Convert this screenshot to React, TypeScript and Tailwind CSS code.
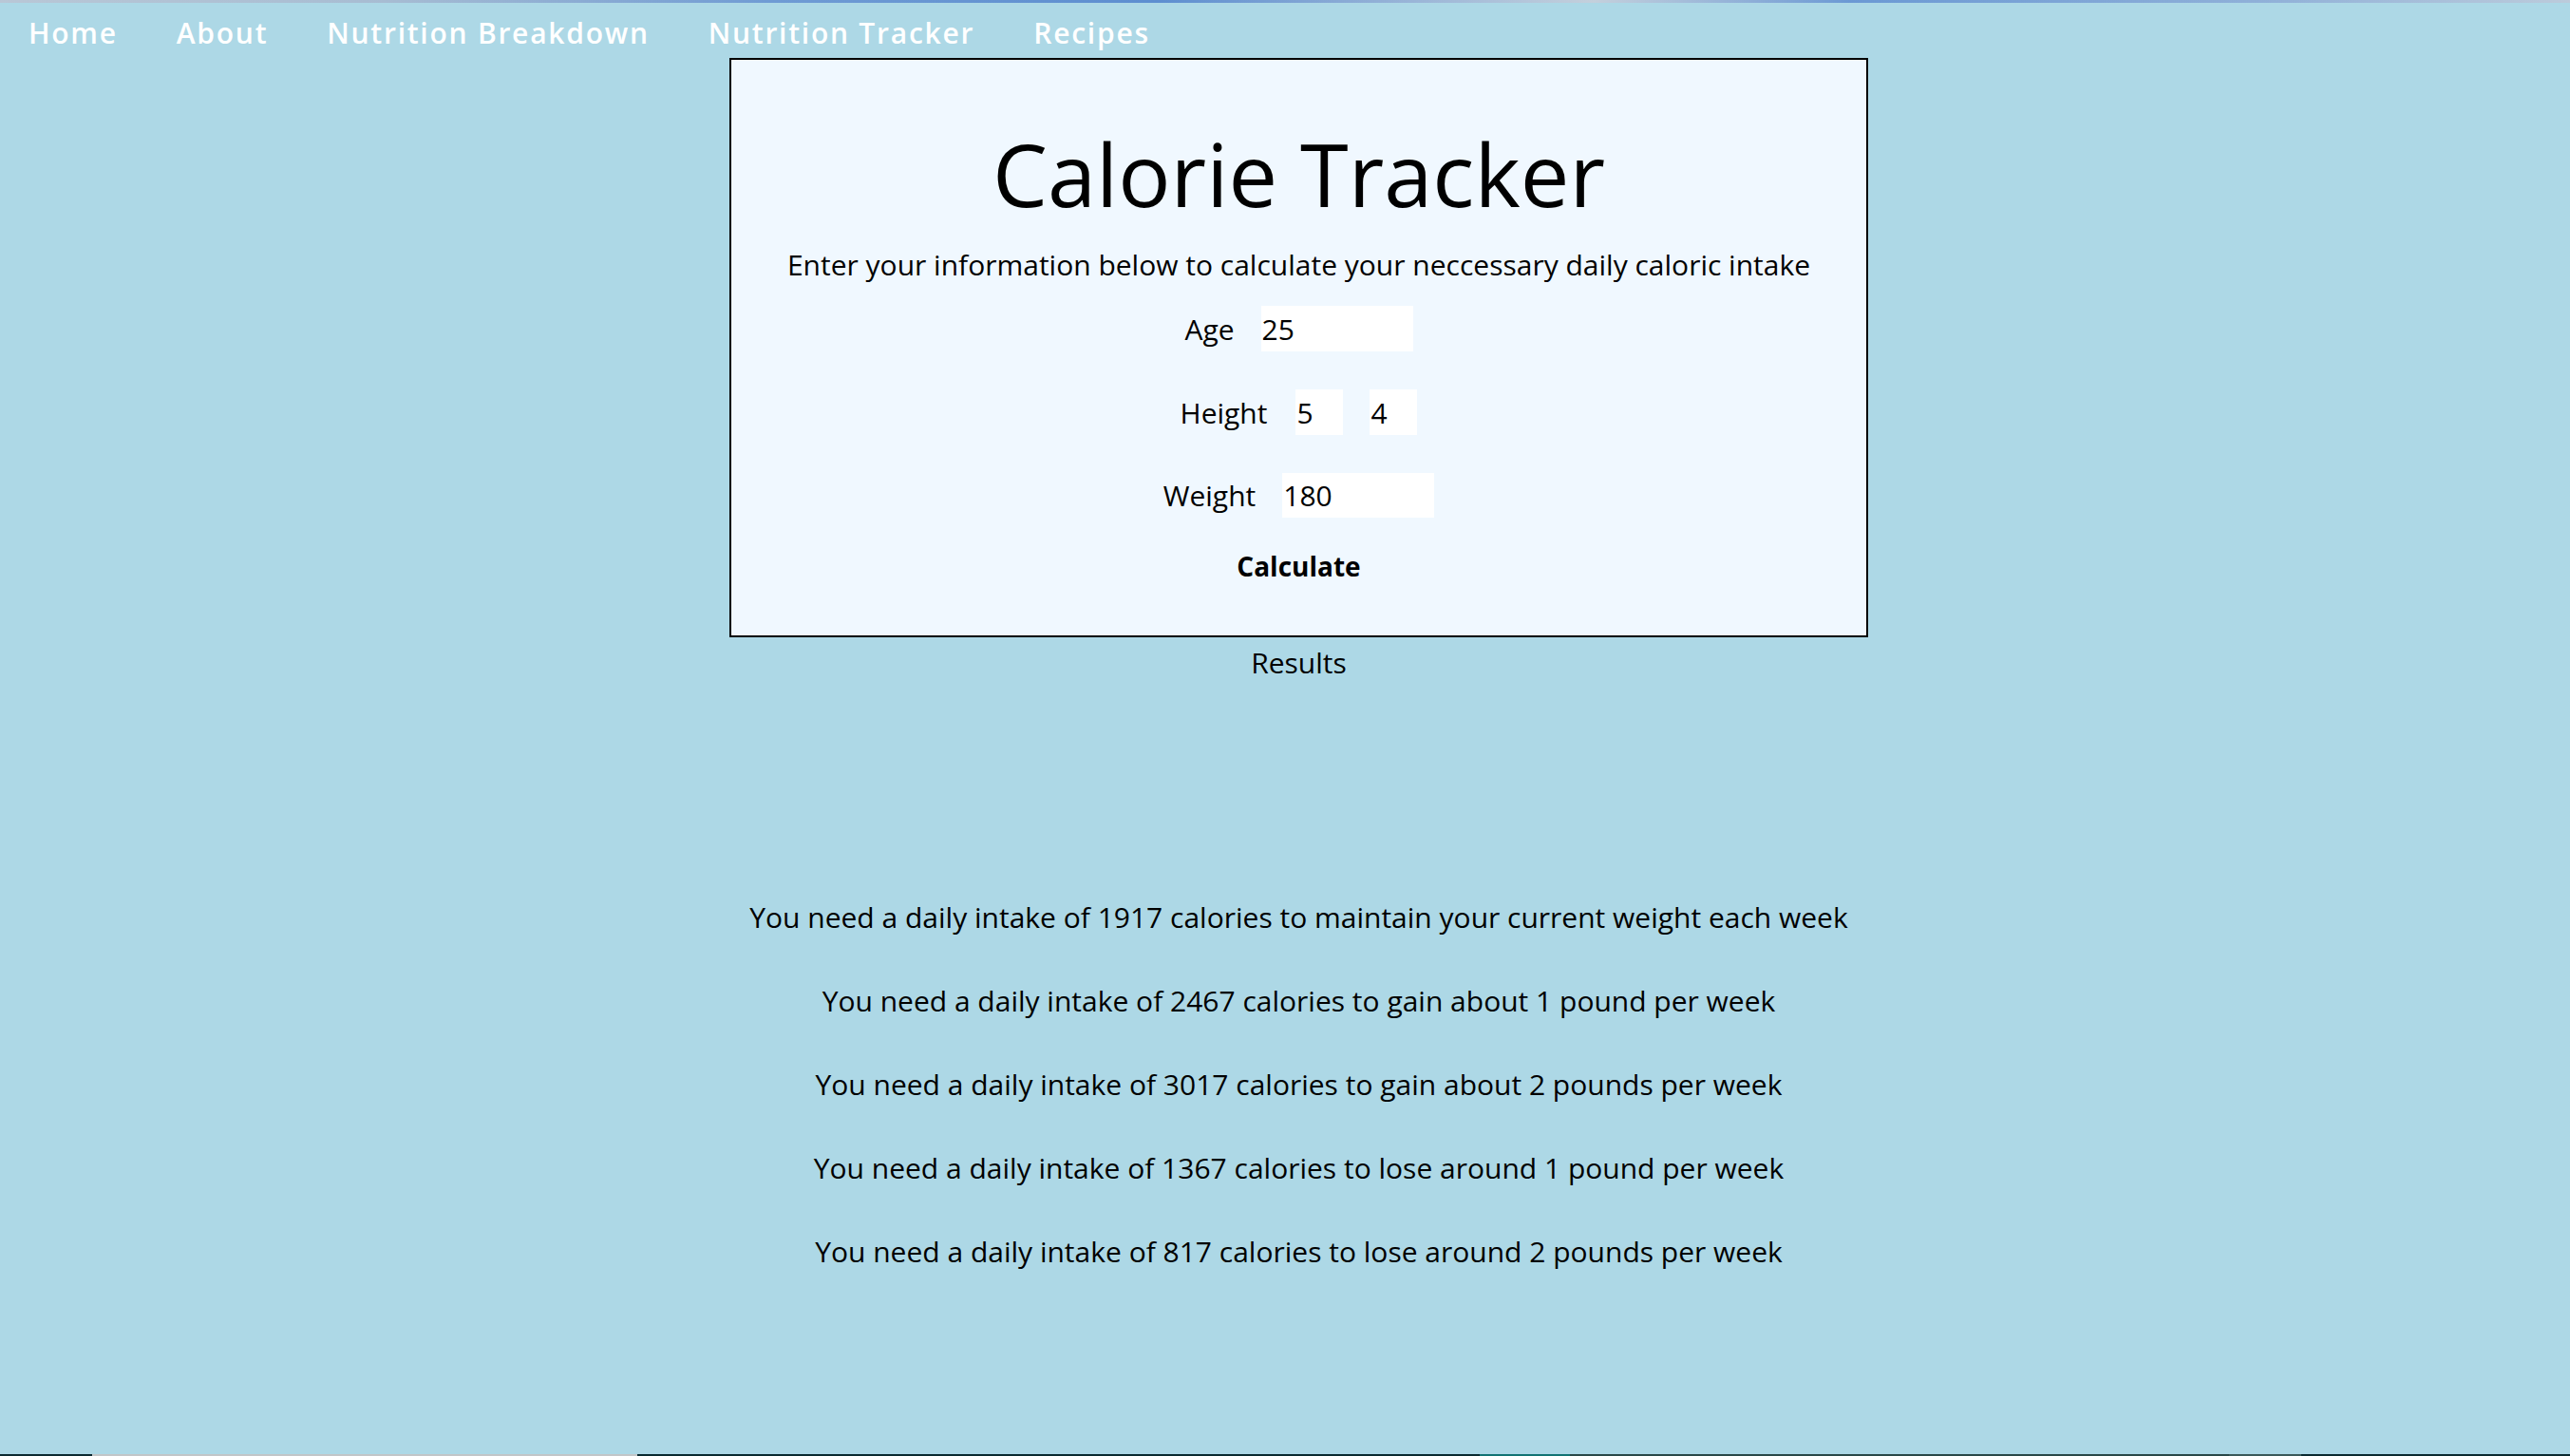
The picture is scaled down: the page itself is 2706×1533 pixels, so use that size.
import React from "react";

const font = { fontFamily: '"Open Sans", "Noto Sans", sans-serif' };

const results = [
  "You need a daily intake of 1917 calories to maintain your current weight each week",
  "You need a daily intake of 2467 calories to gain about 1 pound per week",
  "You need a daily intake of 3017 calories to gain about 2 pounds per week",
  "You need a daily intake of 1367 calories to lose around 1 pound per week",
  "You need a daily intake of 817 calories to lose around 2 pounds per week",
];

export default function App() {
  return (
    <div className="min-h-screen bg-[#add8e6] flex flex-col text-black" style={font}>
      <div className="h-[3px] bg-[linear-gradient(90deg,#b9c7d6_0%,#a7bcd2_15%,#6f9bd4_30%,#5d8ed0_45%,#c4d0dc_62%,#6b99d4_72%,#8fb0d8_88%,#bccbdb_100%)]" />
      <nav className="h-[58px] pt-[5px] flex items-center pl-[30px] gap-[62px] text-white font-semibold text-[30px] tracking-[1.75px]">
        <span>Home</span>
        <span>About</span>
        <span>Nutrition Breakdown</span>
        <span>Nutrition Tracker</span>
        <span>Recipes</span>
      </nav>
      <main className="flex flex-col items-center pl-[29px]">
        <section className="w-[1199px] h-[610px] border-2 border-black bg-[#f0f8ff] flex flex-col items-center">
          <h1 className="mt-[70px] h-[100px] flex items-center text-[92px] leading-none font-normal">
            Calorie Tracker
          </h1>
          <p className="mt-[25px] h-[40px] flex items-center text-[30px]">
            Enter your information below to calculate your neccessary daily caloric intake
          </p>
          <div className="mt-[24px] h-[48px] flex items-center gap-[28px] text-[30px]">
            <span>Age</span>
            <input
              readOnly
              value="25"
              className="w-[160px] h-[48px] bg-white pl-[1px] text-[30px] outline-none"
            />
          </div>
          <div className="mt-[40px] h-[48px] flex items-center gap-[30px] text-[30px]">
            <span>Height</span>
            <div className="flex gap-[28px]">
              <input
                readOnly
                value="5"
                className="w-[50px] h-[48px] bg-white pl-[1px] text-[30px] outline-none"
              />
              <input
                readOnly
                value="4"
                className="w-[50px] h-[48px] bg-white pl-[1px] text-[30px] outline-none"
              />
            </div>
          </div>
          <div className="mt-[40px] h-[47px] flex items-center gap-[28px] text-[30px]">
            <span>Weight</span>
            <input
              readOnly
              value="180"
              className="w-[160px] h-[47px] bg-white pl-[1px] text-[30px] outline-none"
            />
          </div>
          <button className="mt-[31px] h-[40px] flex items-center text-[28px] font-bold">
            Calculate
          </button>
        </section>
        <div className="mt-[6px] h-[40px] flex items-center text-[30px]">Results</div>
        <div className="mt-[228px] flex flex-col items-center gap-[48px] text-[30px]">
          {results.map((r) => (
            <p key={r} className="h-[40px] flex items-center">
              {r}
            </p>
          ))}
        </div>
      </main>
      <div className="flex-1" />
      <div className="h-[2px] flex">
        <div className="w-[97px] bg-[#0c2a31]" />
        <div className="w-[574px] bg-[#c2c6c8]" />
        <div className="w-[887px] bg-[#0a2a30]" />
        <div className="w-[95px] bg-[#137373]" />
        <div className="w-[694px] bg-[#2a4848]" />
        <div className="w-[76px] bg-[#3b5a5a]" />
        <div className="flex-1 bg-[#0b2a30]" />
      </div>
    </div>
  );
}
